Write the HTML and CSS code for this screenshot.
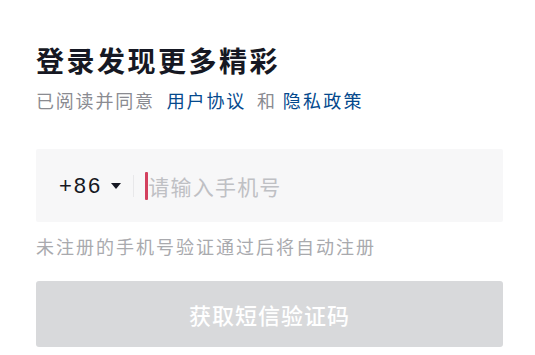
FILE: index.html
```html
<!DOCTYPE html>
<html lang="zh-CN">
<head>
    <meta charset="UTF-8">
    <meta name="viewport" content="width=device-width, initial-scale=1.0">
    <title>手机号登录</title>
    <link rel="stylesheet" href="styles.css">
</head>
<body>
    <div class="login-panel">
        <h1 class="login-title">登录发现更多精彩</h1>
        <div class="login-agree">
            已阅读并同意<a class="agree-link" href="#">用户协议</a><span class="agree-and">和</span><a class="agree-link agree-link-last" href="#">隐私政策</a>
        </div>
        <div class="phone-box">
            <div class="area-code">
                <span class="area-num">+86</span>
                <span class="area-arrow"></span>
            </div>
            <span class="phone-divider"></span>
            <span class="phone-caret"></span>
            <span class="phone-placeholder">请输入手机号</span>
        </div>
        <div class="phone-tip">未注册的手机号验证通过后将自动注册</div>
        <button class="sms-btn" disabled>获取短信验证码</button>
    </div>
</body>
</html>
```

FILE: styles.css
```css
body {
    background: #fff;
    font-family: "Noto Sans CJK SC", "Noto Sans", sans-serif;
    margin: 0;
    padding: 0;
}
.login-panel {
    width: 467px;
    padding: 40px 0 0 36px;
}
.login-title {
    margin: 0;
    font-size: 28px;
    line-height: 40px;
    font-weight: bold;
    letter-spacing: 2.5px;
    color: #161823;
}
.login-agree {
    margin-top: 7px;
    font-size: 18px;
    line-height: 26px;
    letter-spacing: 1.8px;
    color: #8a8b91;
}
.agree-link {
    color: #04498d;
    text-decoration: none;
    margin-left: 12px;
}
.agree-link-last {
    margin-left: 6px;
    letter-spacing: 2.2px;
}
.agree-and {
    margin-left: 11px;
}
.phone-box {
    margin-top: 36px;
    height: 73px;
    background: #f7f7f8;
    border-radius: 2px;
    display: flex;
    align-items: center;
    padding-left: 23px;
}
.area-code {
    display: flex;
    align-items: center;
    color: #161823;
}
.area-num {
    font-family: "Liberation Sans", Arial, sans-serif;
    font-size: 22px;
    letter-spacing: 2px;
}
.area-arrow {
    width: 0;
    height: 0;
    border-left: 5px solid transparent;
    border-right: 5px solid transparent;
    border-top: 6px solid #161823;
    margin-left: 9px;
}
.phone-divider {
    width: 1px;
    height: 22px;
    background: #e8e8ea;
    margin-left: 12px;
}
.phone-caret {
    width: 3px;
    height: 28px;
    background: #d3405e;
    border-radius: 1px;
    margin-left: 11px;
}
.phone-placeholder {
    font-size: 21px;
    color: #bfc0c4;
    letter-spacing: 1.2px;
}
.phone-tip {
    margin-top: 12px;
    font-size: 18px;
    line-height: 24px;
    letter-spacing: 2px;
    color: #a9aaae;
}
.sms-btn {
    display: block;
    width: 100%;
    height: 66px;
    margin-top: 23px;
    border: none;
    border-radius: 3px;
    background: #d8d9db;
    color: #fff;
    font-family: inherit;
    font-size: 22px;
    font-weight: 500;
    letter-spacing: 1px;
}
```
